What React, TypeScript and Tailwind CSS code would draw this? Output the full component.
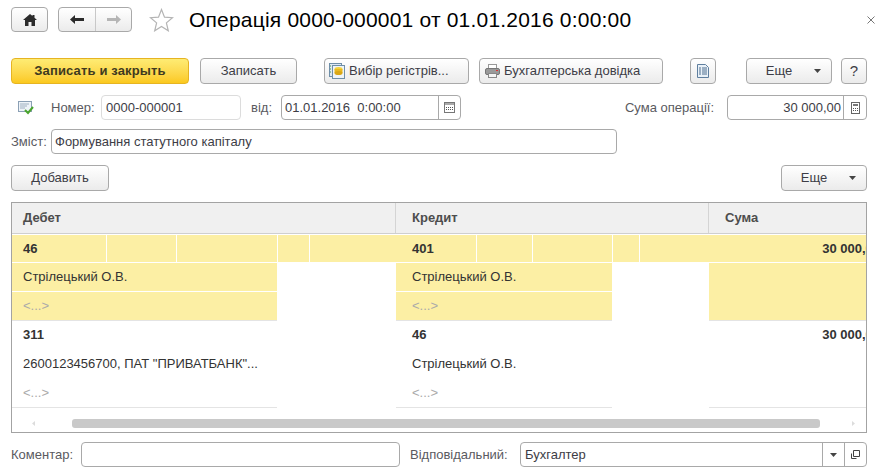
import React from "react";

const btn =
  "flex items-center justify-center h-[26px] rounded-[4px] border border-[#a9a9a9] bg-gradient-to-b from-white to-[#ebebeb] text-[13px] text-[#3d3d46]";
const field = "flex items-center h-[25px] rounded-[4px] border border-[#a9a9a9] bg-white text-[13px] text-[#3d3d46]";
const label = "text-[13px] text-[#5a5a5f]";

function Caret({ className = "" }: { className?: string }) {
  return (
    <svg width="7" height="4" viewBox="0 0 7 4" className={className}>
      <path d="M0 0h7L3.5 4z" fill="#444" />
    </svg>
  );
}

function Calendar() {
  return (
    <svg width="11" height="11" viewBox="0 0 11 11">
      <rect x="0.5" y="0.5" width="10" height="10" fill="#fff" stroke="#777" />
      <rect x="1" y="1" width="9" height="2" fill="#aaa" />
      <path d="M2 5h1v1H2zM4 5h1v1H4zM6 5h1v1H6zM8 5h1v1H8zM2 7h1v1H2zM4 7h1v1H4zM6 7h1v1H6zM8 7h1v1H8z" fill="#555" />
    </svg>
  );
}

function Calc() {
  return (
    <svg width="9" height="12" viewBox="0 0 9 12">
      <rect x="0.5" y="0.5" width="8" height="11" fill="#fff" stroke="#666" />
      <rect x="2" y="2" width="5" height="2" fill="#777" />
      <path d="M2 6h1v1H2zM4 6h1v1H4zM6 6h1v1H6zM2 8h1v1H2zM4 8h1v1H4zM6 8h1v1H6z" fill="#555" />
    </svg>
  );
}

function MoreButton({ width }: { width: string }) {
  return (
    <div className={`${btn} ${width} relative`}>
      <span className="mr-[20px]">Еще</span>
      <Caret className="absolute right-[10px] top-[10px]" />
    </div>
  );
}

function TopRow() {
  return (
    <div className="flex items-center h-[25px] mt-[7px] ml-[11px]">
      <div className={`${btn} w-[37px] !h-[25px]`}>
        <svg width="14" height="12" viewBox="0 0 14 12">
          <path d="M7 0L0 6h2v6h3.5V8h3v4H12V6h2L11.5 3.8V1h-2v1z" fill="#2b2b2b" />
        </svg>
      </div>
      <div className={`${btn} w-[74px] !h-[25px] ml-[10px]`}>
        <div className="w-[37px] h-full flex items-center justify-center border-r border-[#c8c8c8]">
          <svg width="14" height="9" viewBox="0 0 14 9">
            <path d="M0 4.500l5-4.500v3h9v3H5v3z" fill="#2b2b2b" />
          </svg>
        </div>
        <div className="flex-1 h-full flex items-center justify-center">
          <svg width="14" height="9" viewBox="0 0 14 9">
            <path d="M14 4.500L9 0v3H0v3h9v3z" fill="#b5b5b5" />
          </svg>
        </div>
      </div>
      <svg width="25" height="24" viewBox="0 0 25 24" className="ml-[17px]">
        <path
          d="M12.5 1.5l3 7.6 8 .6-6.1 5.2 1.9 7.9-6.8-4.3-6.8 4.3 1.9-7.9L1.5 9.700l8-.6z"
          fill="#fff"
          stroke="#b4b4b4"
          strokeWidth="1.2"
        />
      </svg>
      <div className="ml-[15px] text-[21px] tracking-[0.2px] text-black leading-none whitespace-nowrap">
        Операція 0000-000001 от 01.01.2016 0:00:00
      </div>
      <div className="flex-1" />
      <svg width="8" height="8" viewBox="0 0 8 8" className="mr-[6px]">
        <path d="M0.5 0.5l7 7M7.5 0.5l-7 7" stroke="#777" strokeWidth="1" />
      </svg>
    </div>
  );
}

function Toolbar() {
  return (
    <div className="flex items-center mt-[26px] ml-[11px] mr-[14px]">
      <div className="flex items-center justify-center h-[26px] w-[178px] rounded-[4px] border border-[#e6b422] bg-gradient-to-b from-[#feec73] to-[#fbc91c] text-[13px] font-bold tracking-[0.15px] text-[#3f3a20]">
        Записать и закрыть
      </div>
      <div className={`${btn} w-[97px] ml-[11px]`}>Записать</div>
      <div className={`${btn} w-[145px] ml-[27px] !justify-start pl-[4px]`}>
        <svg width="16" height="16" viewBox="0 0 16 16" className="mr-[4px]">
          <rect x="0.5" y="0.5" width="12" height="13" fill="#dfe9f3" stroke="#6f8fa8" />
          <rect x="3.5" y="2.500" width="12" height="13" fill="#eef4f8" stroke="#6f8fa8" />
          <ellipse cx="9.5" cy="6" rx="4" ry="2" fill="#f5d33c" />
          <rect x="5.5" y="6" width="8" height="4" fill="#e9b91f" />
          <ellipse cx="9.5" cy="10" rx="4" ry="2" fill="#d9a716" />
          <path d="M1 3h1M1 6h1M1 9h1" stroke="#4a9a4a" />
        </svg>
        Вибір регістрів...
      </div>
      <div className={`${btn} w-[184px] ml-[10px] !justify-start pl-[5px]`}>
        <svg width="15" height="14" viewBox="0 0 15 14" className="mr-[4px]">
          <rect x="3.5" y="0.5" width="8" height="5" fill="#fff" stroke="#999" />
          <rect x="0.5" y="4.500" width="14" height="6" rx="1.5" fill="#9a9a9a" stroke="#777" />
          <rect x="3.5" y="9.500" width="8" height="4" fill="#f4f4f4" stroke="#888" />
          <rect x="11" y="6" width="2" height="1" fill="#d33" />
        </svg>
        Бухгалтерська довідка
      </div>
      <div className={`${btn} w-[26px] ml-[27px]`}>
        <svg width="12" height="14" viewBox="0 0 12 14">
          <path d="M0.5 0.5h8l3 3v10h-11z" fill="#e9f1f8" stroke="#5f7f9f" />
          <path d="M2 4h2M5 4h5M2 6h2M5 6h5M2 8h2M5 8h5M2 10h2M5 10h5" stroke="#4f6f8f" />
        </svg>
      </div>
      <MoreButton width="w-[86px] ml-[30px]" />
      <div className={`${btn} w-[26px] ml-[9px] !text-[15px]`}>?</div>
    </div>
  );
}

function NumberRow() {
  return (
    <div className="flex items-center mt-[11px] ml-[11px] mr-[14px]">
      <svg width="16" height="14" viewBox="0 0 16 14" className="ml-[7px]">
        <rect x="0.5" y="0.5" width="13" height="10" fill="#eef3f8" stroke="#8ba0b5" />
        <path d="M2 3h9M2 5h7M2 7h5" stroke="#9fb0c0" />
        <path d="M7 9l3 3 5-6" fill="none" stroke="#4aa52e" strokeWidth="2" />
      </svg>
      <span className={`${label} ml-[17px] w-[50px]`}>Номер:</span>
      <div className={`${field} w-[140px] !border-[#dcdcdc] pl-[4px]`}>0000-000001</div>
      <span className={`${label} ml-[10px] w-[30px]`}>від:</span>
      <div className={`${field} w-[180px]`}>
        <div className="flex-1 pl-[3px] whitespace-pre">01.01.2016  0:00:00</div>
        <div className="w-[22px] h-full border-l border-[#a9a9a9] flex items-center justify-center">
          <Calendar />
        </div>
      </div>
      <div className="flex-1" />
      <span className={`${label} mr-[13px]`}>Сума операції:</span>
      <div className={`${field} w-[140px]`}>
        <div className="flex-1 text-right pr-[2px]">30 000,00</div>
        <div className="w-[23px] h-full border-l border-[#a9a9a9] flex items-center justify-center">
          <Calc />
        </div>
      </div>
    </div>
  );
}

function DescriptionRow() {
  return (
    <div className="flex items-center mt-[9px] ml-[11px] mr-[14px]">
      <span className={`${label} w-[40px]`}>Зміст:</span>
      <div className={`${field} w-[566px] pl-[3px]`}>Формування статутного капіталу</div>
    </div>
  );
}

function Cell({ w, bg, last }: { w: string; bg: boolean; last?: boolean }) {
  return <div className={`${w} h-full ${bg ? "bg-[#fcefa4]" : ""} ${last ? "" : "border-r border-white"}`} />;
}

function AccountColumn({
  account,
  sub,
  cells,
  selected,
  wide,
  total,
  pad,
}: {
  account: string;
  sub: string;
  cells: string[];
  selected: boolean;
  wide: string;
  total: string;
  pad: string;
}) {
  const bg = selected ? "bg-[#fcefa4]" : "";
  return (
    <div className={`${total} shrink-0`}>
      <div className={`flex ${selected ? "h-[27px]" : "h-[28px]"}`}>
        <div className={`${cells[0]} h-full ${bg} border-r border-white flex items-center ${pad} text-[13px] font-bold text-[#333]`}>
          {account}
        </div>
        {cells.slice(1).map((c, i) => (
          <Cell key={i} w={c} bg={selected} last={i === cells.length - 2} />
        ))}
      </div>
      <div className={`${wide} h-[28px] mt-[1px] ${bg} flex items-center ${pad} text-[13px] text-[#333] whitespace-nowrap`}>
        {sub}
      </div>
      <div className={`${wide} h-[28px] mt-[1px] ${bg} flex items-center ${pad} text-[13px] text-[#aaa]`}>
        {"<...>"}
      </div>
      <div className={`${wide} h-px bg-[#e4e4e4]`} />
    </div>
  );
}

function SumColumn({ selected }: { selected: boolean }) {
  const bg = selected ? "bg-[#fcefa4]" : "";
  return (
    <div className="flex-1 overflow-hidden">
      <div className={`${selected ? "h-[27px]" : "h-[28px]"} ${bg} flex items-center justify-end text-[13px] font-bold text-[#333] whitespace-nowrap`}>
        <span className="mr-[-14px]">30 000,00</span>
      </div>
      <div className={`h-[57px] mt-[1px] ${bg}`} />
      <div className="h-px bg-[#e4e4e4]" />
    </div>
  );
}

const debitCells = ["w-[95px]", "w-[70px]", "w-[101px]", "w-[32px]", "w-[86px]"];
const creditCells = ["w-[81px]", "w-[56px]", "w-[80px]", "w-[27px]", "w-[69px]"];

function EntryRow({
  debit,
  debitSub,
  credit,
  creditSub,
  selected,
}: {
  debit: string;
  debitSub: string;
  credit: string;
  creditSub: string;
  selected: boolean;
}) {
  return (
    <div className="flex">
      <AccountColumn
        account={debit}
        sub={debitSub}
        cells={debitCells}
        selected={selected}
        wide="w-[265px]"
        total="w-[384px]"
        pad="pl-[11px]"
      />
      <AccountColumn
        account={credit}
        sub={creditSub}
        cells={creditCells}
        selected={selected}
        wide="w-[216px]"
        total="w-[313px]"
        pad="pl-[16px]"
      />
      <SumColumn selected={selected} />
    </div>
  );
}

function EntriesTable() {
  return (
    <div className="mt-[11px] ml-[11px] mr-[14px] h-[231px] border border-[#a3a3a3] flex flex-col">
      <div className="flex h-[31px] bg-[#f0f0f0] border-b border-[#cfcfcf] text-[13px] font-bold text-[#4d4d4d]">
        <div className="w-[384px] border-r border-[#d4d4d4] flex items-center pl-[11px]">Дебет</div>
        <div className="w-[313px] border-r border-[#d4d4d4] flex items-center pl-[16px]">Кредит</div>
        <div className="flex-1 flex items-center pl-[16px]">Сума</div>
      </div>
      <div className="mt-[1px]">
        <EntryRow debit="46" debitSub="Стрілецький О.В." credit="401" creditSub="Стрілецький О.В." selected />
        <EntryRow
          debit="311"
          debitSub={'2600123456700, ПАТ "ПРИВАТБАНК"...'}
          credit="46"
          creditSub="Стрілецький О.В."
          selected={false}
        />
      </div>
      <div className="flex items-center h-[9px] mt-[11px] pl-[20px] pr-[11px]">
        <svg width="3" height="5" viewBox="0 0 3 5">
          <path d="M3 0v5L0 2.500z" fill="#dcdcdc" />
        </svg>
        <div className="ml-[37px] w-[748px] h-[9px] rounded-[3px] bg-[#c9c9c9]" />
        <div className="flex-1" />
        <svg width="3" height="5" viewBox="0 0 3 5">
          <path d="M0 0v5L3 2.500z" fill="#dcdcdc" />
        </svg>
      </div>
    </div>
  );
}

function BottomRow() {
  return (
    <div className="flex items-center mt-[9px] ml-[11px] mr-[14px]">
      <span className={`${label} w-[70px]`}>Коментар:</span>
      <div className={`${field} w-[319px]`} />
      <span className={`${label} ml-[10px] w-[110px]`}>Відповідальний:</span>
      <div className={`${field} w-[347px]`}>
        <div className="flex-1 pl-[4px]">Бухгалтер</div>
        <div className="w-[22px] h-full border-l border-[#a9a9a9] flex items-center justify-center">
          <Caret />
        </div>
        <div className="w-[22px] h-full border-l border-[#a9a9a9] flex items-center justify-center">
          <svg width="9" height="9" viewBox="0 0 9 9">
            <path d="M2.500 6.500v-6h6v6h-6M0.500 3.500v5h5" fill="none" stroke="#444" />
          </svg>
        </div>
      </div>
    </div>
  );
}

export default function App() {
  return (
    <div className="w-[881px] h-[474px] bg-white overflow-hidden font-['Liberation_Sans',Arial,sans-serif]">
      <TopRow />
      <Toolbar />
      <NumberRow />
      <DescriptionRow />
      <div className="flex justify-between mt-[11px] ml-[11px] mr-[14px]">
        <div className={`${btn} w-[98px]`}>Добавить</div>
        <MoreButton width="w-[86px]" />
      </div>
      <EntriesTable />
      <BottomRow />
    </div>
  );
}
